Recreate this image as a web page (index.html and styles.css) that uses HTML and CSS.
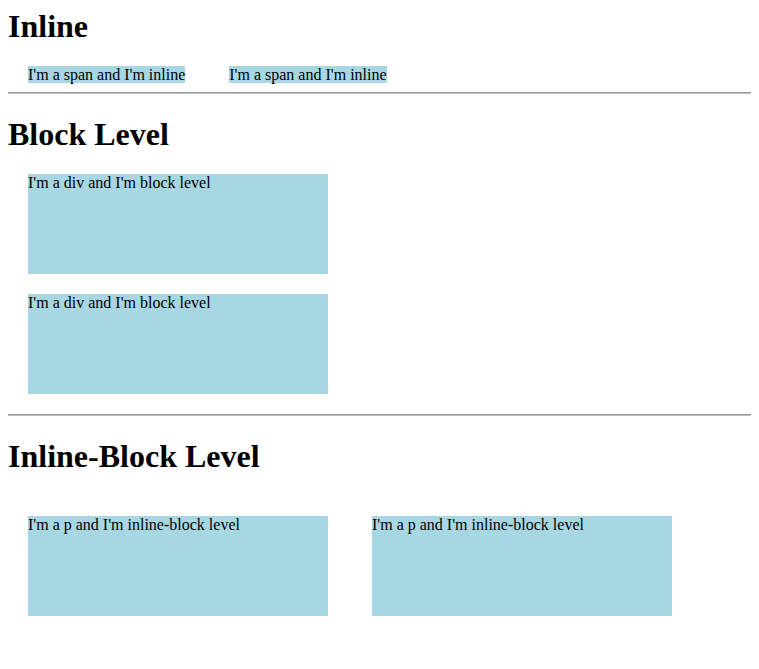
FILE: index.html
```html
<!DOCTYPE html>
<html>
<head>
<meta charset="utf-8">
<link rel="stylesheet" href="styles.css">
</head>
<body>
<h1 class="title title-first">Inline</h1>
<span class="item-inline">I'm a span and I'm inline</span>
<span class="item-inline">I'm a span and I'm inline</span>
<hr class="divider">
<h1 class="title">Block Level</h1>
<div class="item-block">I'm a div and I'm block level</div>
<div class="item-block">I'm a div and I'm block level</div>
<hr class="divider">
<h1 class="title">Inline-Block Level</h1>
<p class="item-inline-block">I'm a p and I'm inline-block level</p>
<p class="item-inline-block">I'm a p and I'm inline-block level</p>
</body>
</html>
```
FILE: styles.css
```css
html, body {
  font-family: "Liberation Serif", "Times New Roman", serif;
  font-size: 16px;
  color: #000;
  background: #fff;
}
body {
  margin: 8px;
}
.title {
  font-size: 32px;
  font-weight: bold;
  margin: 21.44px 0;
}
.title-first {
  margin-top: 0;
}
.item-inline {
  background: #a8d7e4;
  margin: 20px;
}
.item-block {
  background: #a8d7e4;
  width: 300px;
  height: 100px;
  margin: 20px;
}
.item-inline-block {
  display: inline-block;
  background: #a8d7e4;
  width: 300px;
  height: 100px;
  margin: 20px;
  vertical-align: baseline;
}
.divider {
  margin: 8px 0;
  height: 0;
  border: 0;
  border-top: 1px solid #9a9a9a;
  border-bottom: 1px solid #c0c0c0;
}
```
